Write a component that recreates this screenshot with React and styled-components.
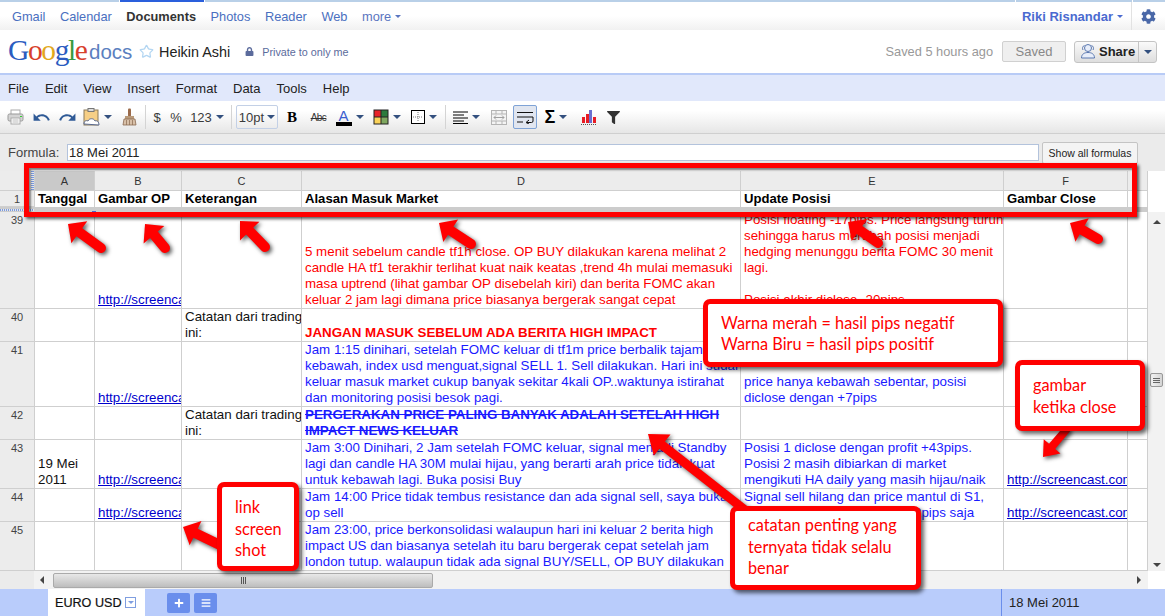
import React from 'react'
import styled, { createGlobalStyle } from 'styled-components'
import { FaCog, FaLock, FaFilter, FaPlus, FaBars } from 'react-icons/fa'
import { MdUndo, MdRedo } from 'react-icons/md'
import { LuStar } from 'react-icons/lu'

const GlobalStyle = createGlobalStyle`
  html, body {
    margin: 0;
    padding: 0;
    background: #fff;
    font-family: "Liberation Sans", Arial, sans-serif;
  }
`

const Page = styled.div`
  position: relative;
  width: 1165px;
  height: 616px;
  overflow: hidden;
  display: flex;
  flex-direction: column;
  color: #222;
`

const TopStrip = styled.div`
  height: 2px;
  display: flex;
  gap: 1px;
  background: #fff;
`
const StripPart = styled.div`
  width: ${(p) => p.$w}px;
  background: ${(p) => (p.$active ? '#2a5fdc' : '#b9d0e8')};
  flex-grow: ${(p) => (p.$grow ? 1 : 0)};
`

const NavBar = styled.nav`
  height: 28px;
  display: flex;
  align-items: center;
  padding-left: 12px;
  gap: 14.5px;
  font-size: 12.8px;
  background: linear-gradient(#fff, #fff 50%, #f1f1f1);
`
const NavLink = styled.span`
  color: ${(p) => (p.$current ? '#333' : '#4a6fc0')};
  font-weight: ${(p) => (p.$current ? 700 : 400)};
`
const NavMore = styled(NavLink)`
  color: #5a75c0;
  display: flex;
  align-items: center;
  gap: 4px;
`
const NavRight = styled.div`
  margin-left: auto;
  height: 100%;
  display: flex;
  align-items: center;
`
const UserName = styled.span`
  font-weight: 700;
  font-size: 13px;
  color: #4a6ad0;
  display: flex;
  align-items: center;
  gap: 4px;
  padding-right: 8px;
`
const GearBox = styled.div`
  width: 33px;
  height: 100%;
  border-left: 1px solid #e2e2e2;
  display: flex;
  align-items: center;
  justify-content: center;
  color: #4a68a8;
  font-size: 15px;
`

const Header = styled.header`
  height: 43px;
  display: flex;
  align-items: center;
  padding: 0 8px;
  background: #fff;
`
const Logo = styled.div`
  font-family: "Liberation Serif", serif;
  font-size: 29.5px;
  letter-spacing: -1.4px;
  line-height: 1;
  width: 81px;
  margin-top: -2px;
`
const LogoLetter = styled.span`
  color: ${(p) => p.$c};
`
const LogoDocs = styled.span`
  font-size: 20.5px;
  color: #5b7fc0;
  width: 50px;
`
const DocStar = styled.span`
  color: #b3d6f2;
  display: flex;
  font-size: 15px;
`
const DocTitle = styled.span`
  font-size: 14.4px;
  color: #222;
  margin-left: 5px;
`
const PrivateNote = styled.span`
  display: flex;
  align-items: center;
  gap: 8px;
  margin-left: 15px;
  font-size: 10.8px;
  color: #5b6b9c;
`
const HeaderRight = styled.div`
  margin-left: auto;
  display: flex;
  align-items: center;
`
const SavedNote = styled.span`
  font-size: 12.8px;
  color: #999;
  margin-right: 9px;
`
const SavedButton = styled.div`
  width: 64px;
  height: 21px;
  box-sizing: border-box;
  border: 1px solid #d0d0d0;
  border-radius: 2px;
  background: #efefef;
  color: #888;
  font-size: 13px;
  display: flex;
  align-items: center;
  justify-content: center;
  margin-right: 8px;
`
const ShareButton = styled.div`
  width: 83px;
  height: 22px;
  box-sizing: border-box;
  border: 1px solid #c4c4c4;
  border-radius: 3px;
  background: linear-gradient(#fafafa, #dedede);
  display: flex;
  align-items: center;
  font-size: 13px;
  font-weight: 700;
  color: #222;
`
const ShareMain = styled.div`
  flex: 1;
  display: flex;
  align-items: center;
  gap: 3px;
  padding-left: 5px;
`
const ShareCaret = styled.div`
  width: 17px;
  height: 100%;
  border-left: 1px solid #c4c4c4;
  display: flex;
  align-items: center;
  justify-content: center;
`

const MenuBar = styled.div`
  height: 26px;
  border-top: 2px solid #b8cbf6;
  background: #e1e8fb;
  display: flex;
  align-items: center;
  gap: 16px;
  padding-left: 8px;
  font-size: 13px;
  color: #222;
`

const Toolbar = styled.div`
  height: 33px;
  box-sizing: border-box;
  display: flex;
  align-items: center;
  padding-left: 4px;
  background: linear-gradient(#fff, #fff 30%, #e6e6e6);
  border-bottom: 1px solid #cfcfcf;
  font-size: 13px;
  color: #3a3a3a;
`
const Tool = styled.div`
  width: ${(p) => p.$w}px;
  flex: none;
  display: flex;
  align-items: center;
  justify-content: center;
  gap: 4px;
`
const Separator = styled.div`
  width: 1px;
  height: 24px;
  background: #d4d4d4;
  margin: 0 1px 0 2px;
`
const Caret = styled.span`
  display: inline-block;
  flex: none;
  width: 0;
  height: 0;
  border-left: ${(p) => p.$s || 4}px solid transparent;
  border-right: ${(p) => p.$s || 4}px solid transparent;
  border-top: ${(p) => p.$s || 4}px solid ${(p) => p.$c || '#33507f'};
`
const FontSizeBox = styled.div`
  width: 42px;
  height: 24px;
  box-sizing: border-box;
  margin-left: 3px;
  border: 1px solid #c3d0e6;
  border-radius: 2px;
  display: flex;
  align-items: center;
  justify-content: center;
  gap: 3px;
  font-size: 13px;
`
const WrapToggle = styled.div`
  width: 24px;
  height: 24px;
  box-sizing: border-box;
  margin-left: 1px;
  border: 1px solid #7fa3d6;
  border-radius: 2px;
  background: #e1e6f0;
  display: flex;
  align-items: center;
  justify-content: center;
`
const BoldGlyph = styled.span`
  font-family: "Liberation Serif", serif;
  font-weight: 700;
  font-size: 15px;
  color: #000;
`
const StrikeGlyph = styled.span`
  font-size: 10px;
  letter-spacing: -0.5px;
  text-decoration: line-through;
  color: #333;
`
const SigmaGlyph = styled.span`
  font-weight: 700;
  font-size: 18px;
  color: #000;
  line-height: 1;
`
const TextColor = styled.div`
  width: 16px;
  display: flex;
  flex-direction: column;
  align-items: center;
  font-size: 15px;
  line-height: 13px;
  color: #3a5ed0;
`
const ColorBar = styled.div`
  width: 16px;
  height: 4px;
  background: ${(p) => p.$c};
`

const FormulaBar = styled.div`
  height: 37px;
  box-sizing: border-box;
  background: #ebebeb;
  display: flex;
  align-items: flex-start;
  padding: 8px 0 0 8px;
  font-size: 13px;
  color: #444;
`
const FormulaLabel = styled.span`
  width: 59px;
  padding-top: 3px;
`
const FormulaInput = styled.div`
  width: 972px;
  height: 17px;
  box-sizing: border-box;
  border: 1px solid #b3c3dc;
  background: #fff;
  color: #222;
  font-size: 13px;
  line-height: 15px;
  padding-left: 1px;
  margin-top: 2px;
`
const FormulaButton = styled.div`
  width: 96px;
  height: 22px;
  box-sizing: border-box;
  margin-left: 3px;
  border: 1px solid #c4c4c4;
  border-radius: 2px;
  background: #f4f4f4;
  color: #222;
  font-size: 10.5px;
  display: flex;
  align-items: center;
  justify-content: center;
`

const SheetArea = styled.div`
  display: flex;
  height: 400px;
`
const SheetGrid = styled.div`
  width: 1148px;
  display: grid;
  grid-template-columns: 35px 60px 87px 120px 439px 263px 124px 20px;
  grid-template-rows: 20px 16px 5px 97px 33px 65px 33px 49px 33px 49px;
  flex: none;
`
const ColHead = styled.div`
  box-sizing: border-box;
  background: ${(p) => (p.$selected ? '#c9c9c9' : '#ececec')};
  border-right: 1px solid #cfcfcf;
  border-bottom: 1px solid #cfcfcf;
  font-size: 11px;
  color: #333;
  display: flex;
  align-items: center;
  justify-content: center;
`
const Corner = styled(ColHead)`
  position: relative;
`
const RowHead = styled.div`
  box-sizing: border-box;
  background: #ececec;
  border-right: 1px solid #cfcfcf;
  border-bottom: 1px solid #cfcfcf;
  font-size: 11px;
  color: #444;
  text-align: center;
  padding-top: 2px;
`
const Cell = styled.div`
  box-sizing: border-box;
  border-right: 1px solid #cfcfcf;
  border-bottom: 1px solid #cfcfcf;
  padding: 0 0 0 3px;
  display: flex;
  flex-direction: column;
  justify-content: flex-end;
  overflow: hidden;
  white-space: pre;
  font-size: 13.33px;
  line-height: 16px;
  background: #fff;
  color: ${(p) => {
    if (p.$tone === 'red') return '#f00'
    if (p.$tone === 'blue') return '#1a1aff'
    if (p.$tone === 'link') return '#0000cc'
    return '#111'
  }};
  font-weight: ${(p) => (p.$bold ? 700 : 400)};
  text-decoration: ${(p) => {
    if (p.$tone === 'link') return 'underline'
    if (p.$strike) return 'line-through'
    return 'none'
  }};
`
const TitleCell = styled(Cell)`
  font-size: 13.1px;
  border-bottom: 0;
  color: #000;
`
const FrozenBar = styled.div`
  grid-column: 1 / -1;
  background: #cccccc;
  position: relative;
`
const FreezeMark = styled.div`
  position: absolute;
  left: 92px;
  top: 4px;
  width: 4px;
  height: 2px;
  background: #4a6ad0;
`
const FreezeRow = styled.div`
  position: absolute;
  left: 0;
  top: 2px;
  width: 34px;
  height: 2px;
  background: repeating-linear-gradient(90deg, #7a9ae0 0 1px, #e8e8e8 1px 2px);
`
const FreezeCol = styled.div`
  position: absolute;
  right: 0;
  top: 0;
  width: 3px;
  height: 100%;
  background: repeating-linear-gradient(0deg, #7a9ae0 0 1px, #e8e8e8 1px 2px);
`

const VScroll = styled.div`
  width: 17px;
  background: #fff;
  display: flex;
  flex-direction: column;
  align-items: center;
`
const VTrack = styled.div`
  margin-top: 41px;
  flex: 1;
  width: 100%;
  background: #f2f2f2;
  display: flex;
  flex-direction: column;
  align-items: center;
  position: relative;
`
const ScrollThumbV = styled.div`
  position: absolute;
  top: 161px;
  left: 2px;
  width: 13px;
  height: 14px;
  box-sizing: border-box;
  border: 1px solid #999;
  border-radius: 2px;
  background: linear-gradient(90deg, #f4f4f4, #d4d4d4);
  display: flex;
  flex-direction: column;
  justify-content: center;
  gap: 1px;
  padding: 0 2px;
`
const GripLineH = styled.div`
  height: 1px;
  background: #666;
`
const ArrowUp = styled.div`
  position: absolute;
  top: ${(p) => p.$top}px;
  width: 0;
  height: 0;
  border-left: 4px solid transparent;
  border-right: 4px solid transparent;
  border-bottom: 4px solid #444;
`
const ArrowDown = styled.div`
  position: absolute;
  bottom: 4px;
  width: 0;
  height: 0;
  border-left: 4px solid transparent;
  border-right: 4px solid transparent;
  border-top: 4px solid #444;
`

const HScroll = styled.div`
  height: 18px;
  display: flex;
  align-items: center;
  background: #f2f2f2;
`
const HGutter = styled.div`
  width: 34px;
  height: 100%;
  background: #ebebeb;
  flex: none;
`
const HCorner = styled.div`
  width: 17px;
  height: 100%;
  background: #fff;
  flex: none;
`
const ArrowLeft = styled.div`
  width: 0;
  height: 0;
  margin-left: 6px;
  border-top: 4px solid transparent;
  border-bottom: 4px solid transparent;
  border-right: 4px solid #444;
`
const ArrowRight = styled.div`
  width: 0;
  height: 0;
  margin-left: auto;
  margin-right: 7px;
  border-top: 4px solid transparent;
  border-bottom: 4px solid transparent;
  border-left: 4px solid #444;
`
const ScrollThumbH = styled.div`
  width: 380px;
  height: 15px;
  margin-left: 9px;
  box-sizing: border-box;
  border: 1px solid #aaa;
  border-radius: 2px;
  background: linear-gradient(#e8e8e8, #bdbdbd);
  display: flex;
  align-items: center;
  justify-content: center;
  gap: 1px;
`
const GripLineV = styled.div`
  width: 1px;
  height: 7px;
  background: #555;
`

const BottomBar = styled.footer`
  flex: 1;
  background: #b9ccfb;
  display: flex;
  align-items: stretch;
  padding-left: 48px;
`
const SheetTab = styled.div`
  width: 97px;
  box-sizing: border-box;
  background: #fff;
  display: flex;
  align-items: center;
  padding-left: 7px;
  gap: 4px;
  font-size: 12.6px;
  color: #111;
  -webkit-text-stroke: 0.2px #111;
`
const TabCaretBox = styled.div`
  width: 11px;
  height: 11px;
  box-sizing: border-box;
  border: 1px solid #7f9ee0;
  display: flex;
  align-items: center;
  justify-content: center;
`
const TabButton = styled.div`
  width: 23px;
  height: 20px;
  align-self: center;
  margin-left: ${(p) => p.$gap}px;
  border-radius: 2px;
  background: #6a8eec;
  color: #fff;
  font-size: 10px;
  display: flex;
  align-items: center;
  justify-content: center;
`
const StatusCell = styled.div`
  margin-left: auto;
  width: 164px;
  box-sizing: border-box;
  border-left: 1px solid #6a8eec;
  padding-left: 7px;
  display: flex;
  align-items: center;
  font-size: 13px;
  color: #222;
`

const SelectionFrame = styled.div`
  position: absolute;
  left: 24px;
  top: 163px;
  width: 1113px;
  height: 54px;
  box-sizing: border-box;
  border: 5px solid #f00;
  box-shadow: 2px 2px 3px rgba(0, 0, 0, 0.65), inset 2px 2px 2px rgba(0, 0, 0, 0.45);
`
const Callout = styled.div`
  position: absolute;
  left: ${(p) => p.$x}px;
  top: ${(p) => p.$y}px;
  width: ${(p) => p.$w}px;
  height: ${(p) => p.$h}px;
  box-sizing: border-box;
  padding: ${(p) => p.$pt}px 0 0 ${(p) => p.$pl}px;
  border: 5px solid #f00;
  border-radius: 7px;
  background: #fff;
  box-shadow: 3px 3px 4px rgba(0, 0, 0, 0.6);
  font-family: Lato, "Open Sans", sans-serif;
  font-size: 16.3px;
  line-height: ${(p) => p.$lh}px;
  color: #f00;
  white-space: pre;
`
const ArrowLayer = styled.svg`
  position: absolute;
  left: 0;
  top: 0;
  width: 1165px;
  height: 616px;
  pointer-events: none;
  filter: drop-shadow(2px 2px 2px rgba(0, 0, 0, 0.65));
`

const Arrow = ({ tail, tip, width = 10, head = 27, len = 14 }) => {
  const dx = tail[0] - tip[0]
  const dy = tail[1] - tip[1]
  const d = Math.hypot(dx, dy)
  const ux = dx / d
  const uy = dy / d
  const neck = [tip[0] + ux * len, tip[1] + uy * len]
  const wingA = [neck[0] - (uy * head) / 2, neck[1] + (ux * head) / 2]
  const wingB = [neck[0] + (uy * head) / 2, neck[1] - (ux * head) / 2]
  return (
    <g>
      <line x1={neck[0]} y1={neck[1]} x2={tail[0]} y2={tail[1]} stroke="#f00" strokeWidth={width} strokeLinecap="round" />
      <polygon points={`${tip} ${wingA} ${neck} ${wingB}`} fill="#f00" />
    </g>
  )
}

const PrinterIcon = () => (
  <svg width="17" height="16" viewBox="0 0 17 16">
    <rect x="4" y="1" width="9" height="5" fill="#fff" stroke="#aaa" />
    <rect x="1" y="5" width="15" height="7" rx="1.5" fill="#d4d4d4" stroke="#999" />
    <rect x="4" y="9" width="9" height="6" fill="#fff" stroke="#aaa" />
    <path d="M5.5 11h6M5.5 13h6" stroke="#bbb" />
    <rect x="13" y="7" width="2" height="1" fill="#3c3" />
  </svg>
)
const PasteIcon = () => (
  <svg width="17" height="18" viewBox="0 0 17 18">
    <rect x="1" y="2" width="14" height="15" fill="#f6cf86" stroke="#8a7a5a" />
    <rect x="5" y="0.5" width="6" height="3" fill="#ddd" stroke="#777" />
    <path d="M1 16c0-3 2-4 4-3 1-3 6-3 7 0 2-1 4 1 4 4z" fill="#fff" stroke="#5a6a90" />
  </svg>
)
const BrushIcon = () => (
  <svg width="15" height="18" viewBox="0 0 15 18">
    <rect x="6" y="0.5" width="3" height="8" rx="1" fill="#9a6a4a" />
    <rect x="3" y="8" width="9" height="3" fill="#b99a7a" />
    <path d="M2 11h11l1 6H1z" fill="#d8c0a8" stroke="#8a6a50" strokeWidth="0.8" />
    <path d="M4.5 12v5M7.5 12v5M10.5 12v5" stroke="#8a6a50" strokeWidth="0.7" />
  </svg>
)
const ColorGridIcon = () => (
  <svg width="16" height="16" viewBox="0 0 16 16">
    <rect x="0.5" y="0.5" width="15" height="15" fill="#222" />
    <rect x="1.5" y="1.5" width="6" height="6" fill="#e8232a" />
    <rect x="8.5" y="1.5" width="6" height="6" fill="#2c7a3c" />
    <rect x="1.5" y="8.5" width="6" height="6" fill="#fbd35a" />
    <rect x="8.5" y="8.5" width="6" height="6" fill="#7fa860" />
  </svg>
)
const BordersIcon = () => (
  <svg width="14" height="14" viewBox="0 0 14 14">
    <rect x="0.5" y="0.5" width="13" height="13" fill="#fff" stroke="#000" />
    <path d="M7 2v10M2 7h10" stroke="#777" strokeDasharray="1 1" />
  </svg>
)
const AlignIcon = () => (
  <svg width="15" height="13" viewBox="0 0 15 13">
    <path d="M0 1h15M0 4h11M0 7h15M0 10h11M0 12.5h15" stroke="#000" strokeWidth="1" />
  </svg>
)
const MergeIcon = () => (
  <svg width="16" height="15" viewBox="0 0 16 15">
    <rect x="0.5" y="0.5" width="15" height="14" fill="#f4f4f4" stroke="#b4b4b4" />
    <path d="M0 4h16M0 11h16M5 0v4M11 0v4M5 11v4M11 11v4" stroke="#b4b4b4" />
    <path d="M3 7.5h10M5 5.5l-2 2 2 2M11 5.5l2 2-2 2" stroke="#a0a0a0" fill="none" />
  </svg>
)
const WrapIcon = () => (
  <svg width="17" height="13" viewBox="0 0 17 13">
    <path d="M0 1.5h16M0 6h16M0 11h6" stroke="#111" fill="none" />
    <path d="M16 6v4a1.5 1.5 0 0 1-1.5 1.5H10M12 9l-3 2.5 3 1.5" stroke="#111" fill="none" />
  </svg>
)
const ChartIcon = () => (
  <svg width="16" height="16" viewBox="0 0 16 16">
    <rect x="1" y="8" width="3" height="6" fill="#e81c24" />
    <rect x="5" y="5" width="3" height="9" fill="#e81c24" />
    <rect x="8" y="1" width="3" height="13" fill="#6a70d0" />
    <rect x="12" y="8" width="3" height="6" fill="#e81c24" />
    <path d="M0 15.5h16" stroke="#555" strokeDasharray="1 1" />
  </svg>
)
const ShareIcon = () => (
  <svg width="16" height="17" viewBox="0 0 16 17">
    <circle cx="8" cy="5" r="3.5" fill="#e8eefa" stroke="#5a78b0" />
    <path d="M1.5 15c0-4 3-5.5 6.5-5.5s6.5 1.5 6.5 5.5z" fill="#e8eefa" stroke="#5a78b0" />
    <path d="M4.5 2.5c-2 .5-2.5 3-1.5 4.5M11.5 2.5c2 .5 2.5 3 1.5 4.5" stroke="#5a78b0" fill="none" />
  </svg>
)

const navItems = ['Gmail', 'Calendar', 'Documents', 'Photos', 'Reader', 'Web']
const menuItems = ['File', 'Edit', 'View', 'Insert', 'Format', 'Data', 'Tools', 'Help']
const googleLetters = [
  ['G', '#2a5cc0'],
  ['o', '#d8402c'],
  ['o', '#e2a81c'],
  ['g', '#2a5cc0'],
  ['l', '#3a9a40'],
  ['e', '#d8402c'],
]
const columns = ['A', 'B', 'C', 'D', 'E', 'F', '']
const titles = ['Tanggal', 'Gambar OP', 'Keterangan', 'Alasan Masuk Market', 'Update Posisi', 'Gambar Close', '']

const note = 'Catatan dari trading\nini:'
const shot = 'http://screencast.com/t/xK29dmQa'

// one entry per row: A, B, C, D, E, F
const rows = [
  {
    n: 39,
    cells: [
      {},
      { text: shot, tone: 'link' },
      {},
      {
        tone: 'red',
        text: '5 menit sebelum candle tf1h close. OP BUY dilakukan karena melihat 2\ncandle HA tf1 terakhir terlihat kuat naik keatas ,trend 4h mulai memasuki\nmasa uptrend (lihat gambar OP disebelah kiri) dan berita FOMC akan\nkeluar 2 jam lagi dimana price biasanya bergerak sangat cepat',
      },
      {
        tone: 'red',
        text: 'Posisi floating -17pips. Price langsung turun\nsehingga harus merubah posisi menjadi\nhedging menunggu berita FOMC 30 menit\nlagi.\n\nPosisi akhir diclose -20pips',
      },
      {},
    ],
  },
  {
    n: 40,
    cells: [
      {},
      {},
      { text: note },
      { tone: 'red', bold: true, text: 'JANGAN MASUK SEBELUM ADA BERITA HIGH IMPACT' },
      {},
      {},
    ],
  },
  {
    n: 41,
    cells: [
      {},
      { text: shot, tone: 'link' },
      {},
      {
        tone: 'blue',
        text: 'Jam 1:15 dinihari, setelah FOMC keluar di tf1m price berbalik tajam\nkebawah, index usd menguat,signal SELL 1. Sell dilakukan. Hari ini sudah\nkeluar masuk market cukup banyak sekitar 4kali OP..waktunya istirahat\ndan monitoring posisi besok pagi.',
      },
      { tone: 'blue', text: 'price hanya kebawah sebentar, posisi\ndiclose dengan +7pips' },
      {},
    ],
  },
  {
    n: 42,
    cells: [
      {},
      {},
      { text: note },
      {
        tone: 'blue',
        bold: true,
        strike: true,
        text: 'PERGERAKAN PRICE PALING BANYAK ADALAH SETELAH HIGH\nIMPACT NEWS KELUAR',
      },
      {},
      {},
    ],
  },
  {
    n: 43,
    cells: [
      { text: '19 Mei\n2011' },
      { text: shot, tone: 'link' },
      {},
      {
        tone: 'blue',
        text: 'Jam 3:00 Dinihari, 2 Jam setelah FOMC keluar, signal menjadi Standby\nlagi dan candle HA 30M mulai hijau, yang berarti arah price tidak kuat\nuntuk kebawah lagi. Buka posisi Buy',
      },
      {
        tone: 'blue',
        text: 'Posisi 1 diclose dengan profit +43pips.\nPosisi 2 masih dibiarkan di market\nmengikuti HA daily yang masih hijau/naik',
      },
      { text: shot, tone: 'link' },
    ],
  },
  {
    n: 44,
    cells: [
      {},
      { text: shot, tone: 'link' },
      {},
      { tone: 'blue', text: 'Jam 14:00 Price tidak tembus resistance dan ada signal sell, saya buka\nop sell' },
      { tone: 'blue', text: 'Signal sell hilang dan price mantul di S1,\nposisi sell diclose dengan +12pips saja' },
      { text: shot, tone: 'link' },
    ],
  },
  {
    n: 45,
    cells: [
      {},
      {},
      {},
      {
        tone: 'blue',
        text: 'Jam 23:00, price berkonsolidasi walaupun hari ini keluar 2 berita high\nimpact US dan biasanya setelah itu baru bergerak cepat setelah jam\nlondon tutup. walaupun tidak ada signal BUY/SELL, OP BUY dilakukan',
      },
      {},
      {},
    ],
  },
]

const App = () => (
  <Page>
    <GlobalStyle />
    <TopStrip>
      <StripPart $w={119} />
      <StripPart $w={84} $active />
      <StripPart $w={810} />
      <StripPart $w={116} />
      <StripPart $grow />
    </TopStrip>
    <NavBar>
      {navItems.map((item) => (
        <NavLink key={item} $current={item === 'Documents'}>
          {item}
        </NavLink>
      ))}
      <NavMore>
        more <Caret $s={3} $c="#5a75c0" />
      </NavMore>
      <NavRight>
        <UserName>
          Riki Risnandar <Caret $s={3} $c="#4a6ad0" />
        </UserName>
        <GearBox>
          <FaCog />
        </GearBox>
      </NavRight>
    </NavBar>

    <Header>
      <Logo>
        {googleLetters.map(([letter, color], i) => (
          <LogoLetter key={i} $c={color}>
            {letter}
          </LogoLetter>
        ))}
      </Logo>
      <LogoDocs>docs</LogoDocs>
      <DocStar>
        <LuStar />
      </DocStar>
      <DocTitle>Heikin Ashi</DocTitle>
      <PrivateNote>
        <FaLock size={9} />
        Private to only me
      </PrivateNote>
      <HeaderRight>
        <SavedNote>Saved 5 hours ago</SavedNote>
        <SavedButton>Saved</SavedButton>
        <ShareButton>
          <ShareMain>
            <ShareIcon />
            Share
          </ShareMain>
          <ShareCaret>
            <Caret />
          </ShareCaret>
        </ShareButton>
      </HeaderRight>
    </Header>

    <MenuBar>
      {menuItems.map((item) => (
        <span key={item}>{item}</span>
      ))}
    </MenuBar>

    <Toolbar>
      <Tool $w={22}>
        <PrinterIcon />
      </Tool>
      <Tool $w={30}>
        <MdUndo size={19} color="#2f5a96" />
      </Tool>
      <Tool $w={23}>
        <MdRedo size={19} color="#2f5a96" />
      </Tool>
      <Tool $w={37}>
        <PasteIcon />
        <Caret />
      </Tool>
      <Tool $w={27}>
        <BrushIcon />
      </Tool>
      <Separator />
      <Tool $w={20}>$</Tool>
      <Tool $w={18}>%</Tool>
      <Tool $w={44}>
        123
        <Caret />
      </Tool>
      <Separator />
      <FontSizeBox>
        10pt
        <Caret />
      </FontSizeBox>
      <Tool $w={28}>
        <BoldGlyph>B</BoldGlyph>
      </Tool>
      <Tool $w={25}>
        <StrikeGlyph>Abc</StrikeGlyph>
      </Tool>
      <Tool $w={37}>
        <TextColor>
          A
          <ColorBar $c="#000" />
        </TextColor>
        <Caret />
      </Tool>
      <Tool $w={37}>
        <ColorGridIcon />
        <Caret />
      </Tool>
      <Tool $w={38}>
        <BordersIcon />
        <Caret />
      </Tool>
      <Separator />
      <Tool $w={39}>
        <AlignIcon />
        <Caret />
      </Tool>
      <Tool $w={26}>
        <MergeIcon />
      </Tool>
      <WrapToggle>
        <WrapIcon />
      </WrapToggle>
      <Tool $w={38}>
        <SigmaGlyph>Σ</SigmaGlyph>
        <Caret />
      </Tool>
      <Tool $w={28}>
        <ChartIcon />
      </Tool>
      <Tool $w={21}>
        <FaFilter size={13} color="#333" />
      </Tool>
    </Toolbar>

    <FormulaBar>
      <FormulaLabel>Formula:</FormulaLabel>
      <FormulaInput>18 Mei 2011</FormulaInput>
      <FormulaButton>Show all formulas</FormulaButton>
    </FormulaBar>

    <SheetArea>
      <SheetGrid>
        <Corner>
          <FreezeCol />
        </Corner>
        {columns.map((col, i) => (
          <ColHead key={i} $selected={col === 'A'}>
            {col}
          </ColHead>
        ))}
        <RowHead>1</RowHead>
        {titles.map((title, i) => (
          <TitleCell key={i} $bold>
            {title}
          </TitleCell>
        ))}
        <FrozenBar>
          <FreezeRow />
          <FreezeMark />
        </FrozenBar>
        {rows.map((row) => (
          <React.Fragment key={row.n}>
            <RowHead>{row.n}</RowHead>
            {row.cells.map((cell, i) => (
              <Cell key={i} $tone={cell.tone} $bold={cell.bold} $strike={cell.strike}>
                {cell.text}
              </Cell>
            ))}
            <Cell />
          </React.Fragment>
        ))}
      </SheetGrid>
      <VScroll>
        <VTrack>
          <ArrowUp $top={8} />
          <ScrollThumbV>
            <GripLineH />
            <GripLineH />
            <GripLineH />
          </ScrollThumbV>
          <ArrowDown />
        </VTrack>
      </VScroll>
    </SheetArea>

    <HScroll>
      <HGutter />
      <ArrowLeft />
      <ScrollThumbH>
        <GripLineV />
        <GripLineV />
        <GripLineV />
      </ScrollThumbH>
      <ArrowRight />
      <HCorner />
    </HScroll>

    <BottomBar>
      <SheetTab>
        EURO USD
        <TabCaretBox>
          <Caret $s={3} $c="#7f9ee0" />
        </TabCaretBox>
      </SheetTab>
      <TabButton $gap={22}>
        <FaPlus />
      </TabButton>
      <TabButton $gap={4}>
        <FaBars />
      </TabButton>
      <StatusCell>18 Mei 2011</StatusCell>
    </BottomBar>

    <SelectionFrame />
    <ArrowLayer viewBox="0 0 1165 616">
      <Arrow tip={[68, 224]} tail={[101, 248]} />
      <Arrow tip={[145, 224]} tail={[165, 248]} />
      <Arrow tip={[240, 221]} tail={[265, 247]} />
      <Arrow tip={[439, 223]} tail={[471, 244]} />
      <Arrow tip={[848, 222]} tail={[878, 243]} />
      <Arrow tip={[1070, 223]} tail={[1098, 239]} />
      <Arrow tip={[1043, 457]} tail={[1066, 430]} width={8} head={22} len={14} />
      <Arrow tip={[183, 527]} tail={[222, 546]} />
      <Arrow tip={[648, 434]} tail={[745, 510]} width={9} head={27} len={18} />
    </ArrowLayer>
    <Callout $x={703} $y={299} $w={300} $h={68} $pt={8} $pl={13} $lh={21}>
      {'Warna merah = hasil pips negatif\nWarna Biru = hasil pips positif'}
    </Callout>
    <Callout $x={1015} $y={360} $w={130} $h={71} $pt={9} $pl={13} $lh={22}>
      {'gambar\nketika close'}
    </Callout>
    <Callout $x={217} $y={482} $w={82} $h={89} $pt={9} $pl={13} $lh={21.5}>
      {'link\nscreen\nshot'}
    </Callout>
    <Callout $x={730} $y={506} $w={191} $h={84} $pt={3} $pl={13} $lh={21.5}>
      {'catatan penting yang\nternyata tidak selalu\nbenar'}
    </Callout>
  </Page>
)

export default App
